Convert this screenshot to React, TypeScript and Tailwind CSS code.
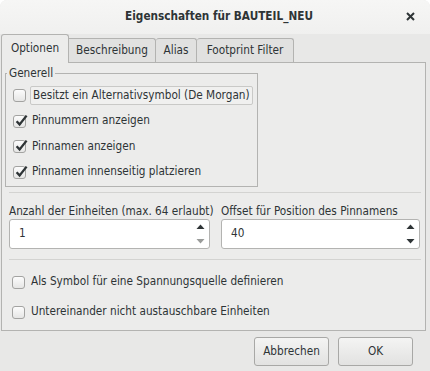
import React from "react";

const font: React.CSSProperties = {
  fontFamily: "'DejaVu Sans Condensed', 'DejaVu Sans', sans-serif",
  fontStretch: "condensed",
};

function Box({ checked }: { checked?: boolean }) {
  return (
    <span className="relative inline-block w-[13px] h-[13px] shrink-0 rounded-[3px] border border-[#a3a3a1] bg-gradient-to-b from-[#fcfcfc] to-[#e6e6e5]">
      {checked && (
        <svg className="absolute left-[0px] top-[-3px]" width="15" height="15" viewBox="0 0 15 15">
          <path d="M2.6 8.2 L5.6 11.4 L12.6 2.6" stroke="#2e3436" strokeWidth="2.3" fill="none" strokeLinejoin="miter" />
        </svg>
      )}
    </span>
  );
}

function Tri({ up, color }: { up?: boolean; color: string }) {
  return (
    <svg width="9" height="5" viewBox="0 0 9 5">
      {up ? <path d="M0.5 5 L4.5 0.5 L8.5 5 Z" fill={color} /> : <path d="M0.5 0 L4.5 4.5 L8.5 0 Z" fill={color} />}
    </svg>
  );
}

function Spin({ value, downDisabled }: { value: string; downDisabled?: boolean }) {
  return (
    <div className="flex h-[30px] items-stretch rounded-[3px] border border-[#b3b3b1] bg-white">
      <div className="flex flex-1 items-center pl-[9px] text-[#2e3436]">{value}</div>
      <div className="flex w-[15px] flex-col items-center justify-center gap-[10px] pr-[2px]">
        <Tri up color="#2e3436" />
        <Tri color={downDisabled ? "#9a9c9a" : "#2e3436"} />
      </div>
    </div>
  );
}

export default function App() {
  return (
    <div className="h-[371px] w-[430px] bg-white text-[11.7px] text-[#2e3436]" style={font}>
      <div className="flex h-full flex-col overflow-hidden rounded-t-[7px] bg-[#e8e8e7]">
        {/* title bar */}
        <div className="relative flex h-[34px] shrink-0 items-center justify-center bg-gradient-to-b from-[#f6f6f5] to-[#f0f0ef]">
          <span className="ml-[8px] text-[11.7px] font-bold text-[#2e3436]">Eigenschaften für BAUTEIL_NEU</span>
          <svg className="absolute right-[15px] top-[12px]" width="9" height="9" viewBox="0 0 9 9">
            <path d="M1 1 L8 8 M8 1 L1 8" stroke="#2e3436" strokeWidth="2" />
          </svg>
        </div>

        {/* tabs */}
        <div className="flex h-[28px] shrink-0 items-end pl-[1px]">
          <div className="relative z-10 -mb-[1px] flex h-[29px] w-[68px] items-center justify-center rounded-t-[3px] border border-b-0 border-[#b3b3b1] bg-[#ececeb] pb-[1px]">
            Optionen
          </div>
          <div className="flex h-[24px] w-[87px] items-center justify-center rounded-tr-[3px] border-t border-r border-[#b3b3b1] bg-[#e1e1e0]">
            Beschreibung
          </div>
          <div className="flex h-[24px] w-[41px] items-center justify-center rounded-t-[3px] border-t border-r border-[#b3b3b1] bg-[#e1e1e0]">
            Alias
          </div>
          <div className="flex h-[24px] w-[97px] items-center justify-center rounded-t-[3px] border-t border-r border-[#b3b3b1] bg-[#e1e1e0]">
            Footprint Filter
          </div>
        </div>

        {/* panel */}
        <div className="ml-[1px] flex h-[269px] w-[425px] shrink-0 flex-col border border-[#b3b3b1] bg-[#ececeb]">
          {/* group box */}
          <div className="relative ml-[3px] mt-[10px] flex h-[114px] w-[253px] flex-col border border-[#b3b3b1] pl-[7px] pt-[9px]">
            <span className="absolute left-[1px] top-[-8px] bg-[#ececeb] px-[2px] leading-[15px]">Generell</span>
            <div className="flex h-[25.5px] items-center">
              <Box />
              <span className="ml-[4px] flex h-[19px] items-center whitespace-nowrap rounded-[2px] border border-[#c9c9c7] bg-[#f0f0ef] px-[2px]">
                Besitzt ein Alternativsymbol (De Morgan)
              </span>
            </div>
            <div className="flex h-[25.5px] items-center gap-[6px]">
              <Box checked />
              <span>Pinnummern anzeigen</span>
            </div>
            <div className="flex h-[25.5px] items-center gap-[6px]">
              <Box checked />
              <span>Pinnamen anzeigen</span>
            </div>
            <div className="flex h-[25.5px] items-center gap-[6px]">
              <Box checked />
              <span>Pinnamen innenseitig platzieren</span>
            </div>
          </div>

          <div className="ml-[7px] mr-[4px] mt-[5px] h-px bg-[#d3d3d1]" />

          {/* spin boxes */}
          <div className="ml-[7px] mr-[5px] mt-[10px] flex gap-[11px]">
            <div className="flex w-[201px] flex-col">
              <div className="h-[16px] whitespace-nowrap leading-[16px]">Anzahl der Einheiten (max. 64 erlaubt)</div>
              <Spin value="1" downDisabled />
            </div>
            <div className="flex flex-1 flex-col">
              <div className="h-[16px] whitespace-nowrap leading-[16px]">Offset für Position des Pinnamens</div>
              <Spin value="40" />
            </div>
          </div>

          <div className="ml-[7px] mr-[4px] mt-[10px] h-px bg-[#d3d3d1]" />

          <div className="mt-[7px] flex h-[30px] items-center gap-[6px] pl-[10px]">
            <Box />
            <span>Als Symbol für eine Spannungsquelle definieren</span>
          </div>
          <div className="flex h-[30px] items-center gap-[6px] pl-[10px]">
            <Box />
            <span>Untereinander nicht austauschbare Einheiten</span>
          </div>
        </div>

        {/* buttons */}
        <div className="mt-[6px] flex justify-end gap-[9px] pr-[17px]">
          <button className="h-[29px] w-[75px] rounded-[3px] border border-[#a8a8a6] bg-gradient-to-b from-[#f4f4f3] to-[#e2e2e1] text-[#2e3436]" style={font}>
            Abbrechen
          </button>
          <button className="h-[29px] w-[75px] rounded-[3px] border border-[#a8a8a6] bg-gradient-to-b from-[#f4f4f3] to-[#e2e2e1] text-[#2e3436]" style={font}>
            OK
          </button>
        </div>
      </div>
    </div>
  );
}
